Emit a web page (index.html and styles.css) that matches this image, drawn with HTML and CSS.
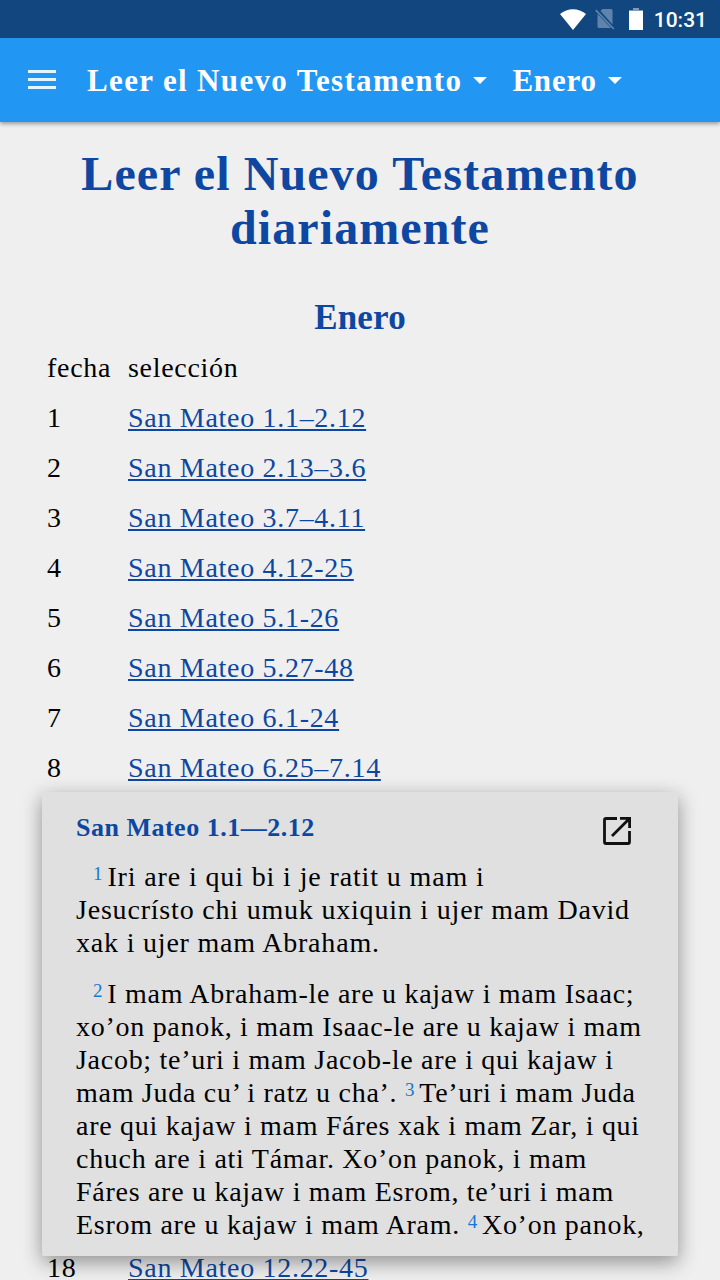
FILE: index.html
```
<!DOCTYPE html>
<html lang="es">

<head>
  <meta charset="utf-8">
  <title>Leer el Nuevo Testamento</title>
  <link rel="stylesheet" href="styles.css">
</head>

<body>
  <div class="status-bar">
    <svg class="wifi" width="26" height="21" viewBox="0 0 26 21"><path d="M0 5C7.500-1.300 18.500-1.300 26 5L13 21Z" fill="#fff"/></svg>
    <svg class="no-sim" width="20" height="22" viewBox="0 0 20 22"><path d="M7.500 1H16Q17.500 1 17.500 2.500V16.500L5.500 3ZM2.500 6L16 20H4Q2.500 20 2.500 18.500Z" fill="#5f83ac"/><path d="M0.800 2.200L18.800 21" stroke="#5f83ac" stroke-width="1.800"/></svg>
    <svg class="battery" width="14" height="22" viewBox="0 0 14 22"><path d="M4 0H10V2H14V4H0V2H4Z" fill="#7f9bbc"/><path d="M0 3H14V22H0Z" fill="#fff"/></svg>
    <span class="clock">10:31</span>
  </div>

  <header class="app-bar">
    <svg class="menu" width="28" height="20" viewBox="0 0 28 20"><path d="M0 1.500H28M0 9.500H28M0 17.500H28" stroke="#e3f5fd" stroke-width="3"/></svg>
    <span class="book">Leer el Nuevo Testamento</span>
    <span class="caret"></span>
    <span class="month">Enero</span>
    <span class="caret"></span>
  </header>

  <main>
    <h1>Leer el Nuevo Testamento diariamente</h1>
    <h2>Enero</h2>
    <table class="plan">
      <tr><td class="day">fecha</td><td>selección</td></tr>
      <tr><td>1</td><td><a href="#">San Mateo 1.1–2.12</a></td></tr>
      <tr><td>2</td><td><a href="#">San Mateo 2.13–3.6</a></td></tr>
      <tr><td>3</td><td><a href="#">San Mateo 3.7–4.11</a></td></tr>
      <tr><td>4</td><td><a href="#">San Mateo 4.12-25</a></td></tr>
      <tr><td>5</td><td><a href="#">San Mateo 5.1-26</a></td></tr>
      <tr><td>6</td><td><a href="#">San Mateo 5.27-48</a></td></tr>
      <tr><td>7</td><td><a href="#">San Mateo 6.1-24</a></td></tr>
      <tr><td>8</td><td><a href="#">San Mateo 6.25–7.14</a></td></tr>
      <tr><td>9</td><td></td></tr>
      <tr><td>10</td><td></td></tr>
      <tr><td>11</td><td></td></tr>
      <tr><td>12</td><td></td></tr>
      <tr><td>13</td><td></td></tr>
      <tr><td>14</td><td></td></tr>
      <tr><td>15</td><td></td></tr>
      <tr><td>16</td><td></td></tr>
      <tr><td>17</td><td></td></tr>
      <tr><td>18</td><td><a href="#">San Mateo 12.22-45</a></td></tr>
    </table>
  </main>

  <section class="popup">
    <div class="popup-head">
      <h3>San Mateo 1.1—2.12</h3>
      <svg class="open" width="28" height="28" viewBox="0 0 28 28"><path d="M14 1.500H3Q1.500 1.500 1.500 3V25Q1.500 26.500 3 26.500H25Q26.500 26.500 26.500 25V14M26 2L9 19" fill="none" stroke="#111" stroke-width="2.800"/><path d="M17 0H28V11H25.200V5L23 2.800H17Z" fill="#111"/></svg>
    </div>
    <p class="first"><sup>1</sup>Iri are i qui bi i je ratit u mam i<br>
      Jesucrísto chi umuk uxiquin i ujer mam David<br>
      xak i ujer mam Abraham.</p>
    <p><sup>2</sup>I mam Abraham-le are u kajaw i mam Isaac;<br>
      xo’on panok, i mam Isaac-le are u kajaw i mam<br>
      Jacob; te’uri i mam Jacob-le are i qui kajaw i<br>
      mam Juda cu’ i ratz u cha’. <sup>3</sup>Te’uri i mam Juda<br>
      are qui kajaw i mam Fáres xak i mam Zar, i qui<br>
      chuch are i ati Támar. Xo’on panok, i mam<br>
      Fáres are u kajaw i mam Esrom, te’uri i mam<br>
      Esrom are u kajaw i mam Aram. <sup>4</sup>Xo’on panok,</p>
  </section>
</body>

</html>
```
FILE: styles.css
```
body {
  margin: 0;
  height: 1280px;
  overflow: hidden;
  position: relative;
  background-color: #efefef;
  color: #000;
  font-family: "Liberation Serif", serif;
  font-size: 28px;
}

.status-bar {
  position: relative;
  z-index: 1;
  display: flex;
  align-items: center;
  justify-content: flex-end;
  height: 38px;
  padding-right: 13px;
  background-color: #11477e;
}

.no-sim {
  margin-left: 9px;
}

.battery {
  margin-left: 14px;
}

.clock {
  margin-left: 11px;
  padding-top: 2px;
  color: #fff;
  font-family: Roboto, sans-serif;
  font-size: 21px;
  font-weight: 500;
}

.app-bar {
  display: flex;
  align-items: center;
  height: 84px;
  padding-left: 28px;
  background-color: #2196f3;
  box-shadow: 0 2px 4px rgba(0, 0, 0, .35);
  color: #fff;
  font-size: 31px;
  font-weight: bold;
}

.book {
  margin-left: 31px;
  padding-top: 2px;
  letter-spacing: 1.35px;
}

.month {
  margin-left: 25px;
  padding-top: 2px;
  letter-spacing: .8px;
}

.caret {
  margin-left: 11px;
  border: 7.5px solid transparent;
  border-top-color: #fff;
  border-bottom: 0;
}

main {
  padding: 25px 47px 0;
}

h1,
h2 {
  margin: 0;
  color: #0d47a1;
  text-align: center;
}

h1 {
  font-size: 48px;
  line-height: 54px;
  letter-spacing: 1.1px;
  margin: 0 -20px;
}

h2 {
  margin-top: 38px;
  font-size: 35px;
  line-height: 50px;
  letter-spacing: .2px;
}

.plan {
  border-collapse: collapse;
  letter-spacing: .7px;
}

.plan td {
  height: 50px;
  padding: 0;
  line-height: 50px;
}

.plan .day {
  width: 81px;
}

.plan a {
  color: #0d47a1;
  text-decoration-thickness: 2px;
  text-underline-offset: 2px;
}

.popup {
  position: absolute;
  top: 792px;
  left: 42px;
  box-sizing: border-box;
  width: 636px;
  height: 464px;
  padding: 19px 34px 0;
  overflow: hidden;
  background-color: #e0e0e0;
  border-radius: 2px;
  box-shadow: 0 6px 20px rgba(0, 0, 0, .4);
}

.popup-head {
  display: flex;
  justify-content: space-between;
  height: 33px;
}

.popup h3 {
  margin: 0;
  color: #0d47a1;
  font-size: 26px;
  line-height: 33px;
  letter-spacing: .5px;
}

.open {
  margin: 6px 13px 0 0;
}

.popup p {
  margin: 18px 0 0;
  line-height: 33px;
  letter-spacing: .72px;
  text-indent: 17px;
  white-space: nowrap;
}

.popup .first {
  margin-top: 16px;
  letter-spacing: .8px;
}

.first::first-line {
  letter-spacing: .87px;
}

.popup sup {
  margin-right: 4px;
  color: #1976d2;
  font-size: 19px;
  line-height: 0;
  vertical-align: 6px;
}
```
